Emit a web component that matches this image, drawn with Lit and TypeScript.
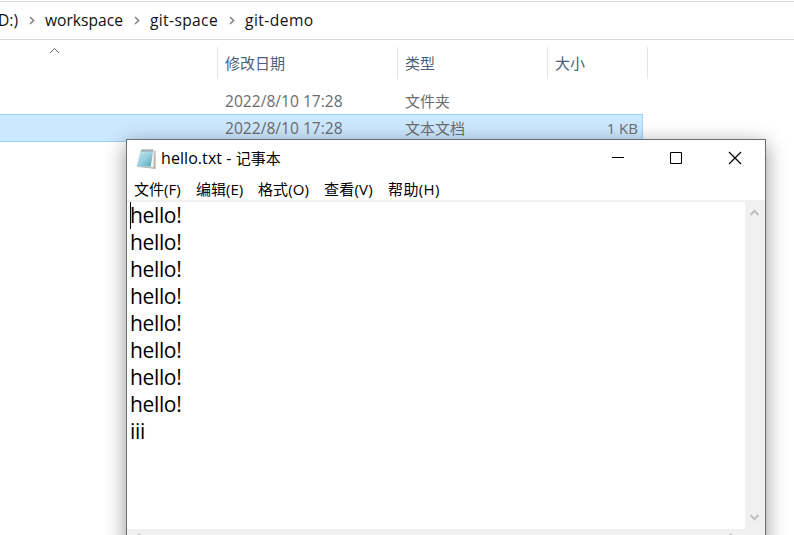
import { LitElement, html, css, svg } from "lit";
import { customElement } from "lit/decorators.js";

@customElement("notepad-window")
class NotepadWindow extends LitElement {
  static styles = css`
    :host { display: block; box-sizing: border-box; width: 640px; height: 440px; border: 1px solid #6b6e70; background: #fff; color: #000; box-shadow: 0 5px 19px rgba(0,0,0,.42); }
    svg { display: block; }
    .title { display: flex; height: 38px; align-items: center; }
    .logo { margin: 0 3px 0 9px; flex: none; }
    .name { flex: 1; font-size: 15px; line-height: 20px; padding-bottom: 2px; white-space: pre; }
    .latin { font-size: 16px; letter-spacing: .07px; }
    .controls { display: flex; width: 176px; }
    .controls svg { width: 59px; height: 38px; flex: none; }
    .menu { display: flex; height: 22px; padding-left: 7px; gap: 14px; align-items: center; font-size: 15px; border-bottom: 2px solid #f0f0f0; }
    .menu span { width: 48px; white-space: nowrap; line-height: 20px; }
    .menu .mid { width: 50px; letter-spacing: .2px; }
    .menu .wide { width: 52px; letter-spacing: .1px; }
    .menu .last { letter-spacing: .4px; }
    .body { display: flex; height: 327px; }
    .text { flex: 1; padding-left: 3px; font-size: 21px; letter-spacing: -.35px; position: relative; }
    .line { height: 27px; line-height: 27px; }
    .caret { position: absolute; left: 3px; top: 0; width: 1px; height: 27px; background: #000; }
    .scroll { width: 20px; background: #f0f0f0; display: flex; flex-direction: column; justify-content: space-between; }
    .hscroll { height: 20px; background: #f0f0f0; display: flex; justify-content: space-between; padding: 0 29px 0 7px; }
  `;
  render() {
    return html`
      <div class="title">
        <svg class="logo" width="22" height="22" viewBox="0 0 22 22">
          <defs><linearGradient id="page" x1="0" y1="0" x2="1" y2="1"><stop offset="0" stop-color="#c8e8f0"/><stop offset=".5" stop-color="#9bd3e1"/><stop offset="1" stop-color="#3f9fb7"/></linearGradient></defs>
          <path d="M6 3h13.5v18L4 19z" fill="#b9a88c"/>
          <path d="M5 2.5h13.4L17.8 19.6 1 18.6z" fill="#f1f4f3" stroke="#b5c0c2" stroke-width=".6"/>
          <path d="M4.8 3.5h12.2L14.7 18.5H1z" fill="url(#page)"/>
          <path d="M4 7h12M3.6 9.5h12M3.2 12h12M2.8 14.5h12" stroke="#79bacb" stroke-width=".6" opacity=".6"/>
          <path d="M6 1v3M8 1v3M10 1v3M12 1v3M14 1v3M16 1v3" stroke="#75888f" stroke-width=".9"/>
        </svg>
        <span class="name"><span class="latin">hello.txt - </span>记事本</span>
        <div class="controls">
          <svg viewBox="0 0 59 38"><path d="M23 17.5h12" stroke="#000"/></svg>
          <svg viewBox="0 0 59 38"><path d="M22.5 12.5h11v11h-11z" fill="none" stroke="#000"/></svg>
          <svg viewBox="0 0 59 38"><path d="M22 12l12 12M34 12L22 24" stroke="#000" stroke-width="1.2"/></svg>
        </div>
      </div>
      <div class="menu"><span>文件(F)</span><span>编辑(E)</span><span class="wide">格式(O)</span><span class="mid">查看(V)</span><span class="wide last">帮助(H)</span></div>
      <div class="body">
        <div class="text">
          <div class="caret"></div>
          ${Array.from({ length: 8 }, () => html`<div class="line">hello!</div>`)}
          <div class="line">iii</div>
        </div>
        <div class="scroll">
          <svg width="20" height="20"><path d="M5.5 13l4-4.2 4 4.2" fill="none" stroke="#bfbfbf" stroke-width="2"/></svg>
          <svg width="20" height="20"><path d="M5.5 6l4 4.2 4-4.2" fill="none" stroke="#bfbfbf" stroke-width="2"/></svg>
        </div>
      </div>
      <div class="hscroll">
        <svg width="8" height="16"><path d="M6 5l-4 4 4 4" fill="none" stroke="#bfbfbf" stroke-width="2"/></svg>
        <svg width="8" height="16"><path d="M2 5l4 4-4 4" fill="none" stroke="#bfbfbf" stroke-width="2"/></svg>
      </div>`;
  }
}

const chevron = svg`<path d="M1 1l3.6 3.5L1 8" fill="none" stroke="#858585" stroke-width="1.6"/>`;

@customElement("app-root")
class AppRoot extends LitElement {
  static styles = css`
    :host { display: block; position: relative; width: 794px; height: 535px; overflow: hidden; background: #fff; font-family: "Open Sans", "Noto Sans CJK SC", sans-serif; }
    .address { box-sizing: border-box; height: 39px; margin-top: 1px; border-top: 1px solid #d9d9d9; border-bottom: 1px solid #d9d9d9; display: flex; align-items: center; font-size: 15.6px; color: #111; }
    .address span { white-space: nowrap; line-height: 20px; padding-bottom: 2px; }
    .address svg { width: 7px; height: 9px; flex: none; }
    .drive { width: 29px; }
    .drive i { font-style: normal; display: inline-block; margin-left: -2px; }
    .ws { width: 78px; margin: 0 11px 0 9px; }
    .gs { width: 68px; margin: 0 11px 0 9px; letter-spacing: .35px; }
    .gd { margin-left: 9px; letter-spacing: .45px; }
    .head, .row { display: grid; grid-template-columns: 218px 180px 150px 100px; align-items: center; }
    .head { height: 32px; margin: 7px 0 8px; color: #4c607a; font-size: 15px; }
    .head > div { box-sizing: border-box; height: 32px; line-height: 32px; border-right: 1px solid #e5e5e5; padding-left: 7px; }
    .head .sort { padding-left: 49px; }
    .sort svg { display: block; }
    .row { box-sizing: border-box; width: 643px; height: 27px; font-size: 15px; color: #6d6d6d; grid-template-columns: 217px 180px 150px 91px; }
    .row span { padding-left: 8px; line-height: 26px; white-space: nowrap; }
    .row .date { font-size: 15.6px; }
    .row .size { text-align: right; }
    .selected { background: #cce8ff; height: 28px; border: 1px solid #99d1ff; border-left: 0; }
    notepad-window { position: absolute; left: 126px; top: 139px; }
  `;
  render() {
    const chev = html`<svg viewBox="0 0 7 9">${chevron}</svg>`;
    return html`
      <div class="address"><span class="drive"><i>D:)</i></span>${chev}<span class="ws">workspace</span>${chev}<span class="gs">git-space</span>${chev}<span class="gd">git-demo</span></div>
      <div class="head"><div class="sort"><svg width="11" height="8"><path d="M1 6l4.5-4.5L10 6" fill="none" stroke="#5d5d5d"/></svg></div><div>修改日期</div><div>类型</div><div>大小</div></div>
      <div class="row"><span></span><span class="date">2022/8/10 17:28</span><span>文件夹</span><span></span></div>
      <div class="row selected"><span></span><span class="date">2022/8/10 17:28</span><span>文本文档</span><span class="size">1 KB</span></div>
      <notepad-window></notepad-window>`;
  }
}
